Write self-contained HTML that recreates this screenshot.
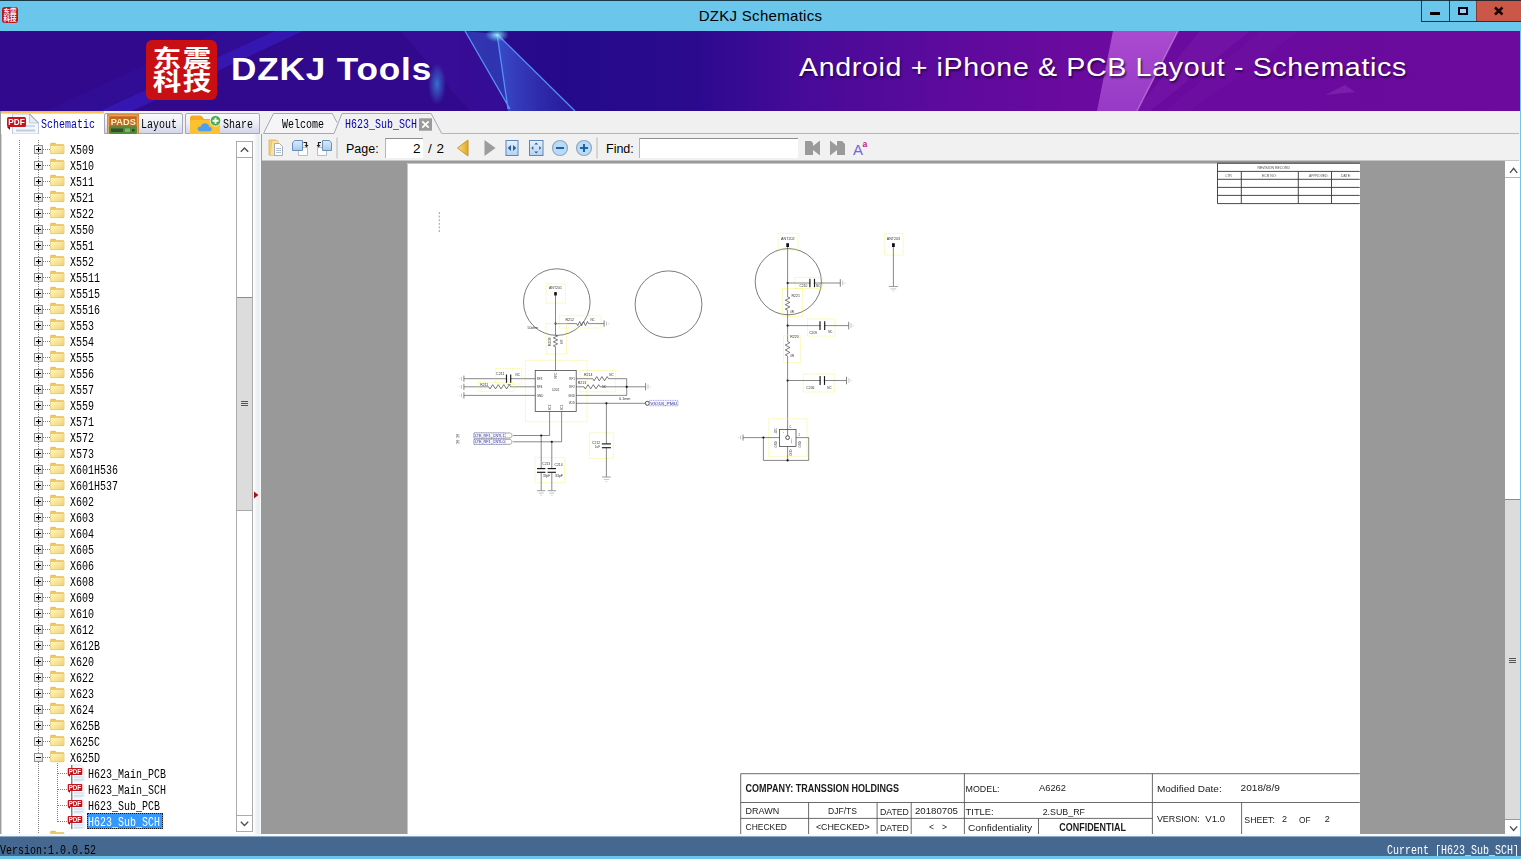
<!DOCTYPE html>
<html lang="en"><head><meta charset="utf-8"><title>DZKJ Schematics</title>
<style>
html,body{margin:0;padding:0;}
body{width:1521px;height:859px;overflow:hidden;background:#f0f0f0;font-family:"Liberation Sans",sans-serif;}
#win{position:relative;width:1521px;height:859px;overflow:hidden;background:#f0f0f0;}
.abs{position:absolute;}
/* SimSun-like narrow mono text */
.ss{font-family:"Liberation Mono",monospace;font-size:12px;line-height:16px;white-space:pre;display:inline-block;transform:scaleX(0.8333);transform-origin:0 50%;color:#000;}
/* title bar */
#titlebar{position:absolute;left:0;top:0;width:1521px;height:31px;background:#6ac6ea;}
#titlebar .topline{position:absolute;left:0;top:0;width:1521px;height:1px;background:rgba(10,30,40,.85);z-index:5;}
#title{position:absolute;left:0;top:7px;letter-spacing:.3px;width:1521px;text-align:center;font-size:15px;line-height:18px;color:#000;}
#appicon{position:absolute;left:2px;top:7px;width:16px;height:16px;border-radius:3px;background:#c01414;overflow:hidden;}
#wbtns{position:absolute;left:1421px;top:0;width:100px;height:22px;border:1px solid #143848;border-top:none;border-right:none;box-sizing:border-box;}
#wbtns .b{position:absolute;top:0;height:20px;}
/* banner */
#banner{position:absolute;left:0;top:31px;width:1520px;height:80px;overflow:hidden;background:linear-gradient(90deg,#30098c 0%,#30098c 30%,#240a8b 37%,#2c0a8f 46%,#480a99 53%,#5c0a9d 62%,#6a0a9f 70%,#6b0a9d 100%);}
#rightedge{position:absolute;left:1520px;top:22px;width:1px;height:837px;background:#6ac6ea;}
#logo{position:absolute;left:146px;top:9px;width:71px;height:60px;border-radius:6px;background:#c80f14;}
#logo span{position:absolute;transform:scale(1.1,.9);color:#fff;font-family:"Noto Sans CJK SC","WenQuanYi Zen Hei",sans-serif;font-weight:700;font-size:26px;line-height:26px;}
#bt1{position:absolute;left:231px;top:19px;font-family:"Liberation Sans",sans-serif;font-weight:700;font-size:31.4px;line-height:40px;letter-spacing:.75px;color:#fff;white-space:pre;transform:scaleX(1.12);transform-origin:0 50%;}
#bt2{position:absolute;left:799px;top:20px;font-family:"Liberation Sans",sans-serif;font-size:26px;line-height:32px;letter-spacing:.58px;color:#fff;white-space:pre;text-shadow:1px 2px 2px rgba(30,0,60,.8);transform:scaleX(1.1);transform-origin:0 50%;}
/* tabs row */
#tabs{position:absolute;left:0;top:111px;width:1520px;height:24px;background:#f0f0f0;}
.ltab{position:absolute;top:2px;height:21px;box-sizing:border-box;border:1px solid #a3a8b8;border-bottom:1px solid #a3a8b8;border-radius:2px 2px 0 0;background:linear-gradient(#fbfbfd 0%,#eceef6 50%,#d3d5ea 100%);}
#ltab0{position:absolute;left:0;top:0;width:104px;height:24px;background:linear-gradient(#f9b536 0,#fbc863 2px,#fff 3.5px,#fff 100%);box-sizing:border-box;border-left:1px solid #9c9c9c;}
/* left panel */
#left{position:absolute;left:0;top:134px;width:253px;height:701px;background:#fff;overflow:hidden;}
#split{position:absolute;left:253px;top:134px;width:8px;height:701px;background:linear-gradient(90deg,#fff 0%,#f2f5f6 35%,#e8edef 70%,#fbfcfc 100%);}
.row{position:absolute;left:0;height:16px;width:236px;}
.vdot{position:absolute;width:1px;background-image:linear-gradient(#808080 50%,transparent 50%);background-size:1px 2px;}
.hdot{position:absolute;height:1px;background-image:linear-gradient(90deg,#808080 50%,transparent 50%);background-size:2px 1px;}
.pm{position:absolute;width:9px;height:9px;box-sizing:border-box;border:1px solid #919191;background:linear-gradient(135deg,#fff,#dcdcdc);}
.pm:before{content:"";position:absolute;left:1px;top:3px;width:5px;height:1px;background:#000;}
.pm.plus:after{content:"";position:absolute;left:3px;top:1px;width:1px;height:5px;background:#000;}
/* scrollbars */
.sb{position:absolute;background:#fff;box-sizing:border-box;}
.sb .btn{position:absolute;left:0;width:100%;height:17px;box-sizing:border-box;border:1px solid #ababab;background:#fff;}
.sb .thumb{position:absolute;left:0;width:100%;background:#dcdcdc;box-sizing:border-box;border:1px solid #ababab;border-top-color:#8c8c8c;}
/* toolbar */
#toolbar{position:absolute;left:262px;top:134px;width:1258px;height:27px;background:#f1f1f2;}
.tbtxt{position:absolute;font-size:12.5px;line-height:16px;color:#000;white-space:pre;}
.inp{position:absolute;background:#fff;box-sizing:border-box;border-top:1px solid #8e8e8e;border-left:1px solid #b5b5b5;}
/* viewer */
#viewer{position:absolute;left:261px;top:161px;width:1244px;height:673px;background:#999;overflow:hidden;}
#paper{position:absolute;left:147px;top:3px;width:952px;height:680px;background:#fff;box-shadow:-1px -1px 0 #c8c8c8;}
/* status */
#status{position:absolute;left:0;top:836px;width:1521px;height:20px;background:#456890;border-top:1px solid #8fa9c4;box-sizing:border-box;}
#strip{position:absolute;left:0;top:834px;width:1520px;height:2px;background:#f6fafd;}
#bottomedge{position:absolute;left:0;top:856px;width:1521px;height:3px;background:#6ac6ea;}

.gl{will-change:transform;}

</style></head>
<body>
<div id="win">
<!-- titlebar -->
<div id="titlebar">
  <div class="topline"></div>
  <div id="appicon"><svg width="16" height="16" viewBox="0 0 16 16"><text x="1.5" y="7.3" font-size="6.5" font-weight="700" fill="#fff" font-family="Noto Sans CJK SC, sans-serif">东震</text><text x="1.5" y="14" font-size="6.5" font-weight="700" fill="#fff" font-family="Noto Sans CJK SC, sans-serif">科技</text></svg></div>
  <div id="title">DZKJ Schematics</div>
  <div id="wbtns">
    <div class="b" style="left:0;width:27px;border-right:1px solid #143848;height:21px"><div class="abs" style="left:8px;top:12px;width:10px;height:3px;background:#000"></div></div>
    <div class="b" style="left:28px;width:26px;height:21px"><div class="abs" style="left:8px;top:7px;width:10px;height:8px;border:2px solid #00001e;box-sizing:border-box;background:#9fd4ea"></div></div>
    <div class="b" style="left:54px;width:46px;height:21px;background:#cb5748;border-left:1px solid #8a3a30;box-sizing:border-box"><svg class="abs" style="left:16px;top:6px" width="12" height="10" viewBox="0 0 12 10"><path d="M2 1.500 L9.500 8.500 M9.500 1.500 L2 8.500" stroke="#140000" stroke-width="2.500" fill="none"/></svg></div>
  </div>
</div>
<div id="rightedge"></div>

<!-- banner -->
<div id="banner">
  <svg class="abs" style="left:0;top:0" width="1519" height="80" viewBox="0 31 1519 80">
    <defs>
      <linearGradient id="tri" x1="0" y1="0" x2="0" y2="1"><stop offset="0" stop-color="#4a7af0" stop-opacity=".55"/><stop offset="1" stop-color="#3c6ee8" stop-opacity=".75"/></linearGradient>
      <linearGradient id="tri2" x1="0" y1="0" x2="1" y2="0"><stop offset="0" stop-color="#3e62e0" stop-opacity=".75"/><stop offset="1" stop-color="#2c34b4" stop-opacity=".35"/></linearGradient>
      <radialGradient id="glow"><stop offset="0" stop-color="#3aa0f0" stop-opacity=".7"/><stop offset="1" stop-color="#3aa0f0" stop-opacity="0"/></radialGradient>
      <radialGradient id="star"><stop offset="0" stop-color="#9ff" stop-opacity=".9"/><stop offset="1" stop-color="#6cf" stop-opacity="0"/></radialGradient>
      <linearGradient id="pk" x1="0" y1="0" x2="0" y2="1"><stop offset="0" stop-color="#c060e0" stop-opacity=".75"/><stop offset="1" stop-color="#b45ae0" stop-opacity=".6"/></linearGradient>
    </defs>
    <polygon points="45,111 220,31 275,31 100,111" fill="#3a1cc0" opacity=".16"/>
    <polygon points="100,111 275,31 303,31 132,111" fill="#3c24d6" opacity=".5"/>
    <polygon points="400,31 465,31 510,111 470,111" fill="#4a14b0" opacity=".28"/><polygon points="465,31 497,34 508,111 510,111" fill="#3450c8" opacity=".6"/><polygon points="497,34 575,111 508,111" fill="url(#tri2)"/>
    <path d="M465 31 L510 109 M497 34 L508 109 M497 34 L575 111" stroke="#5a9cf8" stroke-width="1.3" fill="none" opacity=".9"/>
    <ellipse cx="497" cy="35" rx="12" ry="7" fill="url(#star)"/>
    <ellipse cx="437" cy="84" rx="9" ry="21" fill="url(#glow)" opacity=".95"/>
    <polygon points="1113,31 1178,31 1137,111 1097,111" fill="url(#pk)"/><path d="M1178 31 L1137 111" stroke="#e0a0f0" stroke-width="1.500" opacity=".5"/>
    <polygon points="1200,31 1250,31 1150,111 1135,111" fill="#a050d0" opacity=".13"/>
    <polygon points="1260,31 1300,31 1190,111 1165,111" fill="#9040c8" opacity=".07"/>
    <polygon points="1325,95 1345,85 1355,92" fill="#a050d0" opacity=".3"/>
  </svg>
  <div id="logo"><span style="left:8px;top:4px">东</span><span style="left:38px;top:4px">震</span><span style="left:8px;top:27px">科</span><span style="left:38px;top:27px">技</span></div>
  <div id="bt1">DZKJ Tools</div>
  <div id="bt2">Android + iPhone &amp; PCB Layout - Schematics</div>
</div>

<!-- tabs -->
<div id="tabs"><div class="gl abs" style="left:0;top:0;width:1520px;height:24px">
  <div id="ltab0">
    <svg class="abs" style="left:4px;top:2px" width="36" height="22" viewBox="0 0 36 22">
      <path d="M7.500 1 H24.500 L33.500 10 V21 H7.500 Z" fill="#f4f8fc" stroke="#c3cdd9" stroke-width="1"/>
      <path d="M24.500 1 V10 H33.500" fill="#e4ebf3" stroke="#b9c5d3" stroke-width=".8"/><path d="M24.500 1 L33.500 10" stroke="#6a7480" stroke-width=".7"/>
      <rect x="11" y="12" width="19" height="2" fill="#c8dcf0"/><rect x="11" y="16.500" width="19" height="2" fill="#b9cfe6"/>
      <rect x="2" y="4" width="19" height="10" rx="1.5" fill="#c8141c"/>
      <path d="M2 14 L5 17 V14 Z" fill="#7a0a10"/>
      <text x="3.2" y="12.2" font-family="Liberation Sans, sans-serif" font-weight="700" font-size="8.5" fill="#fff" textLength="16.5" lengthAdjust="spacingAndGlyphs">PDF</text>
    </svg>
    <span class="ss abs" style="left:40px;top:6px;color:#0000b4">Schematic</span>
  </div>
  <div class="ltab" style="left:104px;width:79px;">
    <svg class="abs" style="left:2px;top:0px" width="32" height="20" viewBox="0 0 32 20">
      <rect x="0.500" y="0.500" width="31" height="20" fill="#c4661c" stroke="#d98a3c"/>
      <rect x="1.800" y="1.800" width="28.400" height="18" fill="none" stroke="#f3d9a0" stroke-width=".7"/>
      <rect x="2.200" y="12.300" width="27.600" height="8" fill="#4e8c3c"/>
      <rect x="4" y="14.500" width="12" height="3.500" fill="#30502c"/><rect x="18" y="14.500" width="5" height="3.500" fill="#79b868"/><rect x="25" y="15" width="2.500" height="2.500" fill="#274a24"/>
      <text x="3.800" y="10.700" font-family="Liberation Sans, sans-serif" font-weight="700" font-size="9.300" fill="#fdf0c8" textLength="25" lengthAdjust="spacingAndGlyphs">PADS</text>
    </svg>
    <span class="ss abs" style="left:35.500px;top:3px;">Layout</span>
  </div>
  <div class="ltab" style="left:185px;width:75px;">
    <svg class="abs" style="left:3px;top:0" width="34" height="20" viewBox="0 0 34 20">
      <path d="M1 4 Q1 1.500 3.500 1.500 H11 Q12.500 1.500 13.500 3 L15 5 H28 Q30.500 5 30.500 7.500 V20 H1 Z" fill="#f9a825"/>
      <path d="M1 7.500 Q1 6 2.500 6 H29 Q30.500 6 30.500 7.500 V20 H1 Z" fill="#fcc12f"/>
      <path d="M11.600 17.200 Q8.300 17.200 8.700 14.300 Q9.300 12.100 11.800 12.500 Q13.400 8.400 17.400 9.400 Q20.200 10.300 20.300 13 Q22.900 13 22.800 15.300 Q22.700 17.200 20.600 17.200 Z" fill="#4f9ff0"/>
      <circle cx="26.500" cy="6.800" r="5.300" fill="#47ad4b" stroke="#ffffff" stroke-width=".8"/>
      <path d="M26.500 3.800 V9.800 M23.500 6.800 H29.500" stroke="#fff" stroke-width="1.900"/>
    </svg>
    <span class="ss abs" style="left:37px;top:3px;">Share</span>
  </div>
  <svg class="abs" style="left:255px;top:0" width="200" height="24" viewBox="255 111 200 24">
    <path d="M263.500 133.500 L273.500 113.500 H332.300 L337 122.500 L334 133.500 Z" fill="#f5f5f7" stroke="none"/>
    <path d="M263.500 133.500 L273.500 113.500 H332.300 L337 122.500 M263.500 133.500 H334" fill="none" stroke="#a4a8b4" stroke-width="1"/>
    <path d="M334 133.500 L342 113.500 H431.200 L441.700 133.500" fill="#f1f1f2" stroke="#a4a8b4" stroke-width="1"/>
    <path d="M335 134 H441" stroke="#f1f1f2" stroke-width="1.500"/>
    <rect x="419" y="118.300" width="13" height="12.400" fill="#9a9a9a"/>
    <path d="M422.300 121.300 L428.700 127.700 M428.700 121.300 L422.300 127.700" stroke="#fff" stroke-width="1.800"/>
  </svg>
  <span class="ss abs" style="left:282px;top:6px;">Welcome</span>
  <span class="ss abs" style="left:345px;top:6px;color:#0000b4">H623_Sub_SCH</span>
  <div class="abs" style="left:442px;top:22px;width:1077px;height:1px;background:#b4b6bc"></div>
</div></div>

<!-- tree -->
<div id="left"><div class="gl abs" style="left:0;top:0;width:253px;height:701px">
<div class="abs" style="left:0;top:0;width:1px;height:701px;background:#9c9c9c"></div><div class="abs" style="left:1px;top:0;width:1px;height:701px;background:#d4d4d4"></div>
<svg width="0" height="0" style="position:absolute"><defs>
<linearGradient id="fg" x1="0" y1="0" x2="1" y2="1"><stop offset="0" stop-color="#fff6c8"/><stop offset="1" stop-color="#f0d468"/></linearGradient>
<symbol id="fold" viewBox="0 0 16 13"><path d="M0.500 2 Q0.500 1 1.500 1 H5.500 L7 2.500 H14 Q15 2.500 15 3.500 V11.500 Q15 12.500 14 12.500 H1.500 Q0.500 12.500 0.500 11.500 Z" fill="#ecca62" stroke="#e0ba50" stroke-width=".6"/><path d="M0.800 4.200 H14.700 V11.500 Q14.700 12.200 14 12.200 H1.500 Q0.800 12.200 0.800 11.500 Z" fill="url(#fg)"/></symbol>
<symbol id="pdf" viewBox="0 0 18 17"><path d="M4.500 1 H13.500 L17 4.500 V17 H4.500 Z" fill="#f4f9fd" stroke="#d3deea" stroke-width=".7"/><path d="M4.800 1 V17" stroke="#4c5560" stroke-width="1"/><rect x="7" y="12.300" width="9" height="1.300" fill="#bfe0f4"/><rect x="7" y="14.800" width="9" height="1.300" fill="#bfe0f4"/><rect x="0.700" y="4" width="14.600" height="7" rx="1" fill="#c4141c"/><path d="M0.700 11 L3 12.800 V11 Z" fill="#7a0a10"/><text x="1.700" y="9.800" font-family="Liberation Sans, sans-serif" font-weight="700" font-size="6.500" fill="#fff" textLength="12.500" lengthAdjust="spacingAndGlyphs">PDF</text></symbol>
</defs></svg>
<div class="vdot" style="left:19px;top:6px;height:695px"></div>
<div class="vdot" style="left:38px;top:6px;height:695px"></div>
<div class="row" style="top:7px"><div class="hdot" style="left:43px;top:8px;width:7px"></div><div class="pm plus" style="left:34px;top:4px"></div><svg class="abs" style="left:50px;top:1px" width="15" height="12.500" preserveAspectRatio="none"><use href="#fold"/></svg><span class="ss abs" style="left:70px;top:2px">X509</span></div>
<div class="row" style="top:23px"><div class="hdot" style="left:43px;top:8px;width:7px"></div><div class="pm plus" style="left:34px;top:4px"></div><svg class="abs" style="left:50px;top:1px" width="15" height="12.500" preserveAspectRatio="none"><use href="#fold"/></svg><span class="ss abs" style="left:70px;top:2px">X510</span></div>
<div class="row" style="top:39px"><div class="hdot" style="left:43px;top:8px;width:7px"></div><div class="pm plus" style="left:34px;top:4px"></div><svg class="abs" style="left:50px;top:1px" width="15" height="12.500" preserveAspectRatio="none"><use href="#fold"/></svg><span class="ss abs" style="left:70px;top:2px">X511</span></div>
<div class="row" style="top:55px"><div class="hdot" style="left:43px;top:8px;width:7px"></div><div class="pm plus" style="left:34px;top:4px"></div><svg class="abs" style="left:50px;top:1px" width="15" height="12.500" preserveAspectRatio="none"><use href="#fold"/></svg><span class="ss abs" style="left:70px;top:2px">X521</span></div>
<div class="row" style="top:71px"><div class="hdot" style="left:43px;top:8px;width:7px"></div><div class="pm plus" style="left:34px;top:4px"></div><svg class="abs" style="left:50px;top:1px" width="15" height="12.500" preserveAspectRatio="none"><use href="#fold"/></svg><span class="ss abs" style="left:70px;top:2px">X522</span></div>
<div class="row" style="top:87px"><div class="hdot" style="left:43px;top:8px;width:7px"></div><div class="pm plus" style="left:34px;top:4px"></div><svg class="abs" style="left:50px;top:1px" width="15" height="12.500" preserveAspectRatio="none"><use href="#fold"/></svg><span class="ss abs" style="left:70px;top:2px">X550</span></div>
<div class="row" style="top:103px"><div class="hdot" style="left:43px;top:8px;width:7px"></div><div class="pm plus" style="left:34px;top:4px"></div><svg class="abs" style="left:50px;top:1px" width="15" height="12.500" preserveAspectRatio="none"><use href="#fold"/></svg><span class="ss abs" style="left:70px;top:2px">X551</span></div>
<div class="row" style="top:119px"><div class="hdot" style="left:43px;top:8px;width:7px"></div><div class="pm plus" style="left:34px;top:4px"></div><svg class="abs" style="left:50px;top:1px" width="15" height="12.500" preserveAspectRatio="none"><use href="#fold"/></svg><span class="ss abs" style="left:70px;top:2px">X552</span></div>
<div class="row" style="top:135px"><div class="hdot" style="left:43px;top:8px;width:7px"></div><div class="pm plus" style="left:34px;top:4px"></div><svg class="abs" style="left:50px;top:1px" width="15" height="12.500" preserveAspectRatio="none"><use href="#fold"/></svg><span class="ss abs" style="left:70px;top:2px">X5511</span></div>
<div class="row" style="top:151px"><div class="hdot" style="left:43px;top:8px;width:7px"></div><div class="pm plus" style="left:34px;top:4px"></div><svg class="abs" style="left:50px;top:1px" width="15" height="12.500" preserveAspectRatio="none"><use href="#fold"/></svg><span class="ss abs" style="left:70px;top:2px">X5515</span></div>
<div class="row" style="top:167px"><div class="hdot" style="left:43px;top:8px;width:7px"></div><div class="pm plus" style="left:34px;top:4px"></div><svg class="abs" style="left:50px;top:1px" width="15" height="12.500" preserveAspectRatio="none"><use href="#fold"/></svg><span class="ss abs" style="left:70px;top:2px">X5516</span></div>
<div class="row" style="top:183px"><div class="hdot" style="left:43px;top:8px;width:7px"></div><div class="pm plus" style="left:34px;top:4px"></div><svg class="abs" style="left:50px;top:1px" width="15" height="12.500" preserveAspectRatio="none"><use href="#fold"/></svg><span class="ss abs" style="left:70px;top:2px">X553</span></div>
<div class="row" style="top:199px"><div class="hdot" style="left:43px;top:8px;width:7px"></div><div class="pm plus" style="left:34px;top:4px"></div><svg class="abs" style="left:50px;top:1px" width="15" height="12.500" preserveAspectRatio="none"><use href="#fold"/></svg><span class="ss abs" style="left:70px;top:2px">X554</span></div>
<div class="row" style="top:215px"><div class="hdot" style="left:43px;top:8px;width:7px"></div><div class="pm plus" style="left:34px;top:4px"></div><svg class="abs" style="left:50px;top:1px" width="15" height="12.500" preserveAspectRatio="none"><use href="#fold"/></svg><span class="ss abs" style="left:70px;top:2px">X555</span></div>
<div class="row" style="top:231px"><div class="hdot" style="left:43px;top:8px;width:7px"></div><div class="pm plus" style="left:34px;top:4px"></div><svg class="abs" style="left:50px;top:1px" width="15" height="12.500" preserveAspectRatio="none"><use href="#fold"/></svg><span class="ss abs" style="left:70px;top:2px">X556</span></div>
<div class="row" style="top:247px"><div class="hdot" style="left:43px;top:8px;width:7px"></div><div class="pm plus" style="left:34px;top:4px"></div><svg class="abs" style="left:50px;top:1px" width="15" height="12.500" preserveAspectRatio="none"><use href="#fold"/></svg><span class="ss abs" style="left:70px;top:2px">X557</span></div>
<div class="row" style="top:263px"><div class="hdot" style="left:43px;top:8px;width:7px"></div><div class="pm plus" style="left:34px;top:4px"></div><svg class="abs" style="left:50px;top:1px" width="15" height="12.500" preserveAspectRatio="none"><use href="#fold"/></svg><span class="ss abs" style="left:70px;top:2px">X559</span></div>
<div class="row" style="top:279px"><div class="hdot" style="left:43px;top:8px;width:7px"></div><div class="pm plus" style="left:34px;top:4px"></div><svg class="abs" style="left:50px;top:1px" width="15" height="12.500" preserveAspectRatio="none"><use href="#fold"/></svg><span class="ss abs" style="left:70px;top:2px">X571</span></div>
<div class="row" style="top:295px"><div class="hdot" style="left:43px;top:8px;width:7px"></div><div class="pm plus" style="left:34px;top:4px"></div><svg class="abs" style="left:50px;top:1px" width="15" height="12.500" preserveAspectRatio="none"><use href="#fold"/></svg><span class="ss abs" style="left:70px;top:2px">X572</span></div>
<div class="row" style="top:311px"><div class="hdot" style="left:43px;top:8px;width:7px"></div><div class="pm plus" style="left:34px;top:4px"></div><svg class="abs" style="left:50px;top:1px" width="15" height="12.500" preserveAspectRatio="none"><use href="#fold"/></svg><span class="ss abs" style="left:70px;top:2px">X573</span></div>
<div class="row" style="top:327px"><div class="hdot" style="left:43px;top:8px;width:7px"></div><div class="pm plus" style="left:34px;top:4px"></div><svg class="abs" style="left:50px;top:1px" width="15" height="12.500" preserveAspectRatio="none"><use href="#fold"/></svg><span class="ss abs" style="left:70px;top:2px">X601H536</span></div>
<div class="row" style="top:343px"><div class="hdot" style="left:43px;top:8px;width:7px"></div><div class="pm plus" style="left:34px;top:4px"></div><svg class="abs" style="left:50px;top:1px" width="15" height="12.500" preserveAspectRatio="none"><use href="#fold"/></svg><span class="ss abs" style="left:70px;top:2px">X601H537</span></div>
<div class="row" style="top:359px"><div class="hdot" style="left:43px;top:8px;width:7px"></div><div class="pm plus" style="left:34px;top:4px"></div><svg class="abs" style="left:50px;top:1px" width="15" height="12.500" preserveAspectRatio="none"><use href="#fold"/></svg><span class="ss abs" style="left:70px;top:2px">X602</span></div>
<div class="row" style="top:375px"><div class="hdot" style="left:43px;top:8px;width:7px"></div><div class="pm plus" style="left:34px;top:4px"></div><svg class="abs" style="left:50px;top:1px" width="15" height="12.500" preserveAspectRatio="none"><use href="#fold"/></svg><span class="ss abs" style="left:70px;top:2px">X603</span></div>
<div class="row" style="top:391px"><div class="hdot" style="left:43px;top:8px;width:7px"></div><div class="pm plus" style="left:34px;top:4px"></div><svg class="abs" style="left:50px;top:1px" width="15" height="12.500" preserveAspectRatio="none"><use href="#fold"/></svg><span class="ss abs" style="left:70px;top:2px">X604</span></div>
<div class="row" style="top:407px"><div class="hdot" style="left:43px;top:8px;width:7px"></div><div class="pm plus" style="left:34px;top:4px"></div><svg class="abs" style="left:50px;top:1px" width="15" height="12.500" preserveAspectRatio="none"><use href="#fold"/></svg><span class="ss abs" style="left:70px;top:2px">X605</span></div>
<div class="row" style="top:423px"><div class="hdot" style="left:43px;top:8px;width:7px"></div><div class="pm plus" style="left:34px;top:4px"></div><svg class="abs" style="left:50px;top:1px" width="15" height="12.500" preserveAspectRatio="none"><use href="#fold"/></svg><span class="ss abs" style="left:70px;top:2px">X606</span></div>
<div class="row" style="top:439px"><div class="hdot" style="left:43px;top:8px;width:7px"></div><div class="pm plus" style="left:34px;top:4px"></div><svg class="abs" style="left:50px;top:1px" width="15" height="12.500" preserveAspectRatio="none"><use href="#fold"/></svg><span class="ss abs" style="left:70px;top:2px">X608</span></div>
<div class="row" style="top:455px"><div class="hdot" style="left:43px;top:8px;width:7px"></div><div class="pm plus" style="left:34px;top:4px"></div><svg class="abs" style="left:50px;top:1px" width="15" height="12.500" preserveAspectRatio="none"><use href="#fold"/></svg><span class="ss abs" style="left:70px;top:2px">X609</span></div>
<div class="row" style="top:471px"><div class="hdot" style="left:43px;top:8px;width:7px"></div><div class="pm plus" style="left:34px;top:4px"></div><svg class="abs" style="left:50px;top:1px" width="15" height="12.500" preserveAspectRatio="none"><use href="#fold"/></svg><span class="ss abs" style="left:70px;top:2px">X610</span></div>
<div class="row" style="top:487px"><div class="hdot" style="left:43px;top:8px;width:7px"></div><div class="pm plus" style="left:34px;top:4px"></div><svg class="abs" style="left:50px;top:1px" width="15" height="12.500" preserveAspectRatio="none"><use href="#fold"/></svg><span class="ss abs" style="left:70px;top:2px">X612</span></div>
<div class="row" style="top:503px"><div class="hdot" style="left:43px;top:8px;width:7px"></div><div class="pm plus" style="left:34px;top:4px"></div><svg class="abs" style="left:50px;top:1px" width="15" height="12.500" preserveAspectRatio="none"><use href="#fold"/></svg><span class="ss abs" style="left:70px;top:2px">X612B</span></div>
<div class="row" style="top:519px"><div class="hdot" style="left:43px;top:8px;width:7px"></div><div class="pm plus" style="left:34px;top:4px"></div><svg class="abs" style="left:50px;top:1px" width="15" height="12.500" preserveAspectRatio="none"><use href="#fold"/></svg><span class="ss abs" style="left:70px;top:2px">X620</span></div>
<div class="row" style="top:535px"><div class="hdot" style="left:43px;top:8px;width:7px"></div><div class="pm plus" style="left:34px;top:4px"></div><svg class="abs" style="left:50px;top:1px" width="15" height="12.500" preserveAspectRatio="none"><use href="#fold"/></svg><span class="ss abs" style="left:70px;top:2px">X622</span></div>
<div class="row" style="top:551px"><div class="hdot" style="left:43px;top:8px;width:7px"></div><div class="pm plus" style="left:34px;top:4px"></div><svg class="abs" style="left:50px;top:1px" width="15" height="12.500" preserveAspectRatio="none"><use href="#fold"/></svg><span class="ss abs" style="left:70px;top:2px">X623</span></div>
<div class="row" style="top:567px"><div class="hdot" style="left:43px;top:8px;width:7px"></div><div class="pm plus" style="left:34px;top:4px"></div><svg class="abs" style="left:50px;top:1px" width="15" height="12.500" preserveAspectRatio="none"><use href="#fold"/></svg><span class="ss abs" style="left:70px;top:2px">X624</span></div>
<div class="row" style="top:583px"><div class="hdot" style="left:43px;top:8px;width:7px"></div><div class="pm plus" style="left:34px;top:4px"></div><svg class="abs" style="left:50px;top:1px" width="15" height="12.500" preserveAspectRatio="none"><use href="#fold"/></svg><span class="ss abs" style="left:70px;top:2px">X625B</span></div>
<div class="row" style="top:599px"><div class="hdot" style="left:43px;top:8px;width:7px"></div><div class="pm plus" style="left:34px;top:4px"></div><svg class="abs" style="left:50px;top:1px" width="15" height="12.500" preserveAspectRatio="none"><use href="#fold"/></svg><span class="ss abs" style="left:70px;top:2px">X625C</span></div>
<div class="row" style="top:615px"><div class="hdot" style="left:43px;top:8px;width:7px"></div><div class="pm " style="left:34px;top:4px"></div><svg class="abs" style="left:50px;top:1px" width="15" height="12.500" preserveAspectRatio="none"><use href="#fold"/></svg><span class="ss abs" style="left:70px;top:2px">X625D</span></div>
<div class="vdot" style="left:57px;top:629px;height:59px"></div>
<div class="row" style="top:631px"><div class="hdot" style="left:58px;top:8px;width:9px"></div><svg class="abs" style="left:67px;top:-1px" width="18" height="17"><use href="#pdf"/></svg><span class="ss abs" style="left:87.500px;top:2px;">H623_Main_PCB</span></div>
<div class="row" style="top:647px"><div class="hdot" style="left:58px;top:8px;width:9px"></div><svg class="abs" style="left:67px;top:-1px" width="18" height="17"><use href="#pdf"/></svg><span class="ss abs" style="left:87.500px;top:2px;">H623_Main_SCH</span></div>
<div class="row" style="top:663px"><div class="hdot" style="left:58px;top:8px;width:9px"></div><svg class="abs" style="left:67px;top:-1px" width="18" height="17"><use href="#pdf"/></svg><span class="ss abs" style="left:87.500px;top:2px;">H623_Sub_PCB</span></div>
<div class="row" style="top:679px"><div class="hdot" style="left:58px;top:8px;width:9px"></div><div class="abs" style="left:87px;top:0px;width:76px;height:16px;background:#3399ff;box-sizing:border-box;border:1px dotted #1a1a1a"></div><svg class="abs" style="left:67px;top:-1px" width="18" height="17"><use href="#pdf"/></svg><span class="ss abs" style="left:87.500px;top:2px;color:#fff">H623_Sub_SCH</span></div>
<div class="row" style="top:695px"><svg class="abs" style="left:50px;top:1px" width="15" height="12.500" preserveAspectRatio="none"><use href="#fold"/></svg></div>
<div class="sb" style="left:236px;top:7px;width:17px;height:691px;border-left:1px solid #ababab;border-right:1px solid #ababab">
  <div class="btn" style="top:0;border-left:none;border-right:none"><svg class="abs" style="left:0;top:0" width="15" height="15" viewBox="0 0 15 15"><path d="M3.800 9.700 L7.500 6 L11.200 9.700" fill="none" stroke="#505050" stroke-width="1.400"/></svg></div>
  <div class="thumb" style="top:156px;height:214px;border-left:none;border-right:none"><div class="abs" style="left:4px;top:103px;width:7px;height:1px;background:#555;box-shadow:0 2px 0 #555,0 4px 0 #555"></div></div>
  <div class="btn" style="top:674px;border-left:none;border-right:none"><svg class="abs" style="left:0;top:0" width="15" height="15" viewBox="0 0 15 15"><path d="M3.800 5.800 L7.500 9.500 L11.200 5.800" fill="none" stroke="#505050" stroke-width="1.400"/></svg></div>
</div>
</div></div>
<div id="split"><svg class="abs" style="left:0;top:354px" width="8" height="14"><path d="M1 3.500 L5.400 7 L1 10.500 Z" fill="#a81414"/></svg></div>
<!-- toolbar -->
<div id="toolbar">
  <svg class="abs" style="left:0;top:0" width="640" height="27" viewBox="262 134 640 27">
    <defs>
      <linearGradient id="gold" x1="0" y1="0" x2="1" y2="0"><stop offset="0" stop-color="#f7e08a"/><stop offset="1" stop-color="#e0a81c"/></linearGradient>
      <linearGradient id="blu" x1="0" y1="0" x2="0" y2="1"><stop offset="0" stop-color="#e6f1fc"/><stop offset="1" stop-color="#b4d3f2"/></linearGradient>
      <linearGradient id="pg" x1="0" y1="0" x2="0" y2="1"><stop offset="0" stop-color="#dcebfa"/><stop offset="1" stop-color="#a9c9ec"/></linearGradient>
    </defs>
    <!-- icon1: folder + document -->
    <path d="M269 140 H276 V155 H269 Z" fill="#f2d27a" stroke="#dcb458" stroke-width=".8"/>
    <path d="M272 140.500 L278 140.500 V155.500 H270 Z" fill="#f8e3a0" stroke="#e0bb60" stroke-width=".6"/>
    <path d="M274.500 143.500 H279.500 L282.500 146.500 V155.500 H274.500 Z" fill="#fdfdfd" stroke="#9aa6b4" stroke-width=".9"/>
    <path d="M276 148.500 H281 M276 150.500 H281 M276 152.500 H281" stroke="#9fb4cc" stroke-width=".8"/>
    <!-- icon2: rotate right -->
    <path d="M298.500 147.500 H307.500 V155.500 H298.500 Z" fill="#fdfdfd" stroke="#b0b6be" stroke-width=".9"/>
    <path d="M292.500 143 L294.500 140.500 H302.500 V150.500 H292.500 Z" fill="url(#pg)" stroke="#5b86b8" stroke-width=".9"/>
    <path d="M303.500 142.500 H306.500 V145" fill="none" stroke="#222" stroke-width="1.200"/><path d="M304.500 145 H308.500 L306.500 147.500 Z" fill="#222"/>
    <!-- icon3: rotate left -->
    <path d="M317.500 147.500 H326.500 V155.500 H317.500 Z" fill="#fdfdfd" stroke="#b0b6be" stroke-width=".9"/>
    <path d="M322.500 140.500 H329.500 L331.500 143 V150.500 H322.500 Z" fill="url(#pg)" stroke="#5b86b8" stroke-width=".9"/>
    <path d="M321 142.500 H318.500 V145" fill="none" stroke="#222" stroke-width="1.200"/><path d="M316.500 145 H320.500 L318.500 147.500 Z" fill="#222"/>
    <path d="M337 137.500 V158.500" stroke="#b8b8b8" stroke-width="1"/>
    <!-- prev / next -->
    <path d="M468 140 L457.500 148 L468 156 Z" fill="url(#gold)" stroke="#c8962a" stroke-width="1" stroke-linejoin="round"/>
    <path d="M484.500 140 L495.500 148 L484.500 156 Z" fill="#9c9c9c"/>
    <!-- fit width -->
    <rect x="506" y="140.500" width="12" height="15" fill="url(#blu)" stroke="#5b86b8" stroke-width="1"/>
    <path d="M511 145 L507.700 148 L511 151 Z M513 145 L516.300 148 L513 151 Z" fill="#2e5f96"/>
    <!-- fit page -->
    <rect x="529.500" y="140.500" width="13.500" height="15" fill="url(#blu)" stroke="#5b86b8" stroke-width="1"/>
    <path d="M536.200 142.500 L534.200 144.500 H538.200 Z M536.200 153.500 L534.200 151.500 H538.200 Z M531.300 148 L533.300 146 V150 Z M541.200 148 L539.200 146 V150 Z" fill="#2e5f96"/>
    <!-- zoom out / in -->
    <circle cx="560" cy="148" r="7.500" fill="#b9dbf7" stroke="#8fa8c0" stroke-width="1.200"/>
    <path d="M556 148 H564" stroke="#1f62a8" stroke-width="2"/>
    <circle cx="584" cy="148" r="7.500" fill="#b9dbf7" stroke="#8fa8c0" stroke-width="1.200"/>
    <path d="M580 148 H588 M584 144 V152" stroke="#1f62a8" stroke-width="2"/>
    <path d="M597 137.500 V158.500" stroke="#b8b8b8" stroke-width="1"/>
    <!-- find prev / next -->
    <path d="M805 141 H811 L813 143 V146 L820 140.500 V155.500 L813 150 V155 H805 Z" fill="#9a9a9a"/>
    <path d="M830 140.500 L837 146 V141 H842 L845 144 V155 H837 V150 L830 155.500 Z" fill="#9a9a9a"/>
    <text x="853" y="155.300" font-family="Liberation Sans, sans-serif" font-size="15" fill="#7468d4">A</text>
    <text x="862.500" y="146.500" font-family="Liberation Sans, sans-serif" font-size="8.500" font-weight="700" fill="#c0207a">a</text>
  </svg>
  <span class="tbtxt" style="left:84px;top:7px">Page:</span>
  <div class="inp" style="left:123px;top:4px;width:38px;height:20px"></div>
  <span class="tbtxt" style="left:151px;top:7px;font-size:13.5px">2</span>
  <span class="tbtxt" style="left:166px;top:7px;font-size:13.5px;word-spacing:1px">/ 2</span>
  <span class="tbtxt" style="left:344px;top:7px">Find:</span>
  <div class="inp" style="left:377px;top:4px;width:159px;height:20px"></div>
  <div class="abs" style="left:0;top:26px;width:1257px;height:1px;background:#c6c6c6"></div><div class="abs" style="left:-1px;top:0;width:1px;height:27px;background:#9c9c9c"></div>
</div>

<!-- viewer -->
<div id="viewer">
<div id="paper"></div>
<div class="gl abs" style="left:0;top:0;width:1244px;height:674px"><svg class="abs" style="left:0;top:0" width="1244" height="674" viewBox="261 161 1244 674">
<path d="M1217.5 163.2 L1359.7 163.2" stroke="#333" stroke-width="0.9" fill="none"/>
<path d="M1217.5 171.4 L1359.7 171.4" stroke="#333" stroke-width="0.9" fill="none"/>
<path d="M1217.5 179.3 L1359.7 179.3" stroke="#333" stroke-width="0.9" fill="none"/>
<path d="M1217.5 187.4 L1359.7 187.4" stroke="#333" stroke-width="0.9" fill="none"/>
<path d="M1217.5 195.4 L1359.7 195.4" stroke="#333" stroke-width="0.9" fill="none"/>
<path d="M1217.5 203.6 L1359.7 203.6" stroke="#333" stroke-width="0.9" fill="none"/>
<path d="M1217.5 163.2 L1217.5 203.6" stroke="#333" stroke-width="0.9" fill="none"/>
<path d="M1241.3 171.4 L1241.3 203.6" stroke="#333" stroke-width="0.9" fill="none"/>
<path d="M1298.3 171.4 L1298.3 203.6" stroke="#333" stroke-width="0.9" fill="none"/>
<path d="M1331.5 171.4 L1331.5 203.6" stroke="#333" stroke-width="0.9" fill="none"/>
<text x="1273.7" y="168.6" font-size="3.5" fill="#444" text-anchor="middle" font-family="Liberation Sans, sans-serif" textLength="32.4" lengthAdjust="spacingAndGlyphs">REVISION RECORD</text>
<text x="1228.7" y="176.6" font-size="3.5" fill="#555" text-anchor="middle" font-family="Liberation Sans, sans-serif">LTR</text>
<text x="1269.3" y="176.6" font-size="3.5" fill="#555" text-anchor="middle" font-family="Liberation Sans, sans-serif">ECR NO:</text>
<text x="1318.7" y="176.6" font-size="3.5" fill="#555" text-anchor="middle" font-family="Liberation Sans, sans-serif" textLength="19.5" lengthAdjust="spacingAndGlyphs">APPROVED:</text>
<text x="1346.0" y="176.6" font-size="3.5" fill="#555" text-anchor="middle" font-family="Liberation Sans, sans-serif">DATE:</text>
<path d="M439.3 212 V232" stroke="#777" stroke-width=".7" stroke-dasharray="2 1.6" fill="none"/>
<circle cx="556.8" cy="302.1" r="33.3" fill="none" stroke="#444" stroke-width=".7"/>
<circle cx="668.5" cy="304.3" r="33.4" fill="none" stroke="#444" stroke-width=".7"/>
<circle cx="788.3" cy="281.7" r="33.1" fill="none" stroke="#444" stroke-width=".7"/>
<rect x="546.0" y="283.9" width="19.4" height="19.2" fill="none" stroke="#f0f05a" stroke-width=".65" stroke-dasharray="1.2 .6" opacity=".85"/>
<text x="555.5" y="288.8" font-size="3" fill="#333" text-anchor="middle" font-family="Liberation Sans, sans-serif" textLength="13.0" lengthAdjust="spacingAndGlyphs">ANT201</text>
<rect x="554.2" y="292.1" width="2.6" height="3.4" fill="#111"/>
<path d="M555.5 295.0 L555.5 335.0" stroke="#404040" stroke-width="0.62" fill="none"/>
<circle cx="555.5" cy="323.6" r="1.1" fill="#111"/>
<rect x="559.3" y="315.7" width="41.9" height="12.3" fill="none" stroke="#f0f05a" stroke-width=".65" stroke-dasharray="1.2 .6" opacity=".85"/>
<path d="M555.5 323.6 L576.7 323.6" stroke="#404040" stroke-width="0.62" fill="none"/>
<path d="M576.7 323.6 L577.7 325.7 L579.7 321.5 L581.6 325.7 L583.6 321.5 L585.5 325.7 L587.5 321.5 L588.5 323.6" stroke="#404040" stroke-width="0.7" fill="none" stroke-linejoin="miter"/>
<path d="M588.5 323.6 L604.1 323.6" stroke="#404040" stroke-width="0.62" fill="none"/>
<path d="M604.1 320.4 L604.1 326.8" stroke="#666" stroke-width="0.8" fill="none"/>
<path d="M606.5 321.7 L606.5 325.5" stroke="#aaa" stroke-width="0.7" fill="none"/>
<path d="M608.7 322.8 L608.7 324.4" stroke="#ccc" stroke-width="0.7" fill="none"/>
<text x="565.4" y="321.0" font-size="3" fill="#333" text-anchor="start" font-family="Liberation Sans, sans-serif" textLength="8.6" lengthAdjust="spacingAndGlyphs">R212</text>
<text x="590.4" y="320.6" font-size="3" fill="#333" text-anchor="start" font-family="Liberation Sans, sans-serif">NC</text>
<text x="527.5" y="329.4" font-size="3" fill="#333" text-anchor="start" font-family="Liberation Sans, sans-serif" textLength="10.5" lengthAdjust="spacingAndGlyphs">50ohm</text>
<rect x="546.0" y="323.6" width="20.5" height="30.4" fill="none" stroke="#f0f05a" stroke-width=".65" stroke-dasharray="1.2 .6" opacity=".85"/>
<path d="M555.5 334.9 L557.6 335.9 L553.4 337.9 L557.6 339.9 L553.4 341.8 L557.6 343.8 L553.4 345.8 L555.5 346.8" stroke="#404040" stroke-width="0.7" fill="none" stroke-linejoin="miter"/>
<path d="M555.5 346.8 L555.5 370.5" stroke="#404040" stroke-width="0.62" fill="none"/>
<text x="551.2" y="346.0" font-size="3" fill="#333" text-anchor="start" font-family="Liberation Sans, sans-serif" transform="rotate(-90 551.2 346.0)" textLength="8.6" lengthAdjust="spacingAndGlyphs">R208</text>
<text x="562.8" y="343.5" font-size="3" fill="#333" text-anchor="start" font-family="Liberation Sans, sans-serif" transform="rotate(-90 562.8 343.5)">0R</text>
<rect x="525.4" y="360.3" width="61.6" height="61.5" fill="none" stroke="#f0f05a" stroke-width=".65" stroke-dasharray="1.2 .6" opacity=".85"/>
<rect x="535.2" y="370.5" width="41" height="41" fill="none" stroke="#3c3c3c" stroke-width=".75"/>
<path d="M463.9 378.7 L535.2 378.7" stroke="#404040" stroke-width="0.62" fill="none"/>
<path d="M463.9 375.6 L463.9 381.8" stroke="#666" stroke-width="0.8" fill="none"/>
<path d="M461.5 376.8 L461.5 380.6" stroke="#aaa" stroke-width="0.7" fill="none"/>
<path d="M459.3 377.9 L459.3 379.5" stroke="#ccc" stroke-width="0.7" fill="none"/>
<text x="536.8" y="379.8" font-size="2.9" fill="#333" text-anchor="start" font-family="Liberation Sans, sans-serif">RF3</text>
<path d="M463.9 386.8 L535.2 386.8" stroke="#404040" stroke-width="0.62" fill="none"/>
<path d="M463.9 383.7 L463.9 389.9" stroke="#666" stroke-width="0.8" fill="none"/>
<path d="M461.5 384.9 L461.5 388.7" stroke="#aaa" stroke-width="0.7" fill="none"/>
<path d="M459.3 386.0 L459.3 387.6" stroke="#ccc" stroke-width="0.7" fill="none"/>
<text x="536.8" y="387.9" font-size="2.9" fill="#333" text-anchor="start" font-family="Liberation Sans, sans-serif">RF4</text>
<path d="M463.9 395.4 L535.2 395.4" stroke="#404040" stroke-width="0.62" fill="none"/>
<path d="M463.9 392.3 L463.9 398.5" stroke="#666" stroke-width="0.8" fill="none"/>
<path d="M461.5 393.5 L461.5 397.3" stroke="#aaa" stroke-width="0.7" fill="none"/>
<path d="M459.3 394.6 L459.3 396.2" stroke="#ccc" stroke-width="0.7" fill="none"/>
<text x="536.8" y="396.5" font-size="2.9" fill="#333" text-anchor="start" font-family="Liberation Sans, sans-serif">GND</text>
<text x="574.8" y="379.8" font-size="2.9" fill="#333" text-anchor="end" font-family="Liberation Sans, sans-serif">RF1</text>
<text x="574.8" y="387.9" font-size="2.9" fill="#333" text-anchor="end" font-family="Liberation Sans, sans-serif">RF2</text>
<text x="574.8" y="396.5" font-size="2.9" fill="#333" text-anchor="end" font-family="Liberation Sans, sans-serif">GND</text>
<text x="574.8" y="404.4" font-size="2.9" fill="#333" text-anchor="end" font-family="Liberation Sans, sans-serif">VDD</text>
<text x="555.6" y="390.5" font-size="2.9" fill="#333" text-anchor="middle" font-family="Liberation Sans, sans-serif">U202</text>
<text x="556.6" y="378.5" font-size="2.9" fill="#333" text-anchor="start" font-family="Liberation Sans, sans-serif" transform="rotate(-90 556.6 378.5)">RFC</text>
<text x="550.6" y="410.3" font-size="2.9" fill="#333" text-anchor="start" font-family="Liberation Sans, sans-serif" transform="rotate(-90 550.6 410.3)">SC2</text>
<text x="562.8" y="410.3" font-size="2.9" fill="#333" text-anchor="start" font-family="Liberation Sans, sans-serif" transform="rotate(-90 562.8 410.3)">SC1</text>
<rect x="495.7" y="368.6" width="26.1" height="15.4" fill="none" stroke="#f0f05a" stroke-width=".65" stroke-dasharray="1.2 .6" opacity=".85"/>
<path d="M506.5 374.5 L506.5 382.9" stroke="#1a1a1a" stroke-width="1.15" fill="none"/>
<path d="M510.7 374.5 L510.7 382.9" stroke="#1a1a1a" stroke-width="1.15" fill="none"/>
<rect x="507.2" y="377.9" width="2.8" height="1.6" fill="#fff"/>
<text x="496.0" y="374.8" font-size="3" fill="#333" text-anchor="start" font-family="Liberation Sans, sans-serif" textLength="8.5" lengthAdjust="spacingAndGlyphs">C211</text>
<text x="515.5" y="376.0" font-size="3" fill="#333" text-anchor="start" font-family="Liberation Sans, sans-serif">NC</text>
<rect x="478.0" y="382.3" width="35.9" height="9.0" fill="none" stroke="#f0f05a" stroke-width=".65" stroke-dasharray="1.2 .6" opacity=".85"/>
<rect x="488.6" y="385.8" width="22" height="2" fill="#fff"/>
<path d="M488.6 386.8 L490.0 388.9 L492.7 384.7 L495.5 388.9 L498.3 384.7 L501.0 388.9 L503.8 384.7 L506.6 388.9 L509.3 384.7 L510.7 386.8" stroke="#404040" stroke-width="0.7" fill="none" stroke-linejoin="miter"/>
<text x="480.3" y="385.6" font-size="3" fill="#333" text-anchor="start" font-family="Liberation Sans, sans-serif" textLength="8.0" lengthAdjust="spacingAndGlyphs">R211</text>
<text x="507.5" y="385.2" font-size="2.4" fill="#333" text-anchor="start" font-family="Liberation Sans, sans-serif">NC</text>
<rect x="579.7" y="370.5" width="35.9" height="21.3" fill="none" stroke="#f0f05a" stroke-width=".65" stroke-dasharray="1.2 .6" opacity=".85"/>
<path d="M576.2 378.7 L592.8 378.7" stroke="#404040" stroke-width="0.62" fill="none"/>
<path d="M592.8 378.7 L594.1 380.8 L596.7 376.6 L599.3 380.8 L602.0 376.6 L604.6 380.8 L607.2 376.6 L608.5 378.7" stroke="#404040" stroke-width="0.7" fill="none" stroke-linejoin="miter"/>
<path d="M608.5 378.7 L626.7 378.7" stroke="#404040" stroke-width="0.62" fill="none"/>
<text x="584.0" y="376.2" font-size="3" fill="#333" text-anchor="start" font-family="Liberation Sans, sans-serif" textLength="8.5" lengthAdjust="spacingAndGlyphs">R214</text>
<text x="609.3" y="375.6" font-size="3" fill="#333" text-anchor="start" font-family="Liberation Sans, sans-serif">NC</text>
<path d="M576.2 386.8 L584.0 386.8" stroke="#404040" stroke-width="0.62" fill="none"/>
<path d="M584.0 386.8 L585.3 388.9 L588.0 384.7 L590.7 388.9 L593.3 384.7 L596.0 388.9 L598.7 384.7 L600.0 386.8" stroke="#404040" stroke-width="0.7" fill="none" stroke-linejoin="miter"/>
<path d="M600.0 386.8 L645.6 386.8" stroke="#404040" stroke-width="0.62" fill="none"/>
<text x="577.8" y="384.4" font-size="3" fill="#333" text-anchor="start" font-family="Liberation Sans, sans-serif" textLength="8.5" lengthAdjust="spacingAndGlyphs">R213</text>
<text x="602.2" y="387.6" font-size="3" fill="#333" text-anchor="start" font-family="Liberation Sans, sans-serif">NC</text>
<path d="M576.2 395.4 L626.7 395.4" stroke="#404040" stroke-width="0.62" fill="none"/>
<path d="M626.7 378.7 L626.7 395.4" stroke="#404040" stroke-width="0.62" fill="none"/>
<circle cx="626.7" cy="386.8" r="1.1" fill="#111"/>
<path d="M645.6 383.2 L645.6 390.4" stroke="#666" stroke-width="0.8" fill="none"/>
<path d="M648.0 384.6 L648.0 389.0" stroke="#aaa" stroke-width="0.7" fill="none"/>
<path d="M650.2 385.9 L650.2 387.7" stroke="#ccc" stroke-width="0.7" fill="none"/>
<path d="M576.2 403.3 L645.2 403.3" stroke="#404040" stroke-width="0.62" fill="none"/>
<circle cx="606.4" cy="403.3" r="1.1" fill="#111"/>
<circle cx="647.3" cy="403.3" r="2" fill="#fff" stroke="#222" stroke-width=".8"/>
<rect x="649.5" y="400.4" width="28.5" height="5.4" fill="#f6f6ff" stroke="#4a4ab0" stroke-width=".5" stroke-dasharray="1 .7"/>
<text x="650.2" y="405.0" font-size="3.6" fill="#2a2a9a" text-anchor="start" font-family="Liberation Sans, sans-serif" textLength="27.0" lengthAdjust="spacingAndGlyphs">VIO18_PMU</text>
<text x="619.0" y="400.3" font-size="3" fill="#333" text-anchor="start" font-family="Liberation Sans, sans-serif" textLength="11.5" lengthAdjust="spacingAndGlyphs">0.1mm</text>
<path d="M549.6 411.5 L549.6 435.5 L513.2 435.5" stroke="#404040" stroke-width="0.62" fill="none" stroke-linejoin="miter"/>
<path d="M561.6 411.5 L561.6 441.8 L513.2 441.8" stroke="#404040" stroke-width="0.62" fill="none" stroke-linejoin="miter"/>
<circle cx="541.2" cy="435.5" r="1.1" fill="#111"/>
<circle cx="551.8" cy="441.8" r="1.1" fill="#111"/>
<path d="M474 433.0 H510.5 Q513.6 435.5 510.5 438.0 H474 Z" fill="#fff" stroke="#666" stroke-width=".6"/>
<rect x="474.2" y="433.0" width="31" height="5" fill="#f6f6ff" stroke="#4a4ab0" stroke-width=".5" stroke-dasharray="1 .7"/>
<text x="475.0" y="436.9" font-size="3.5" fill="#2a2a9a" text-anchor="start" font-family="Liberation Sans, sans-serif" textLength="29.5" lengthAdjust="spacingAndGlyphs">LTE_RF1_CNTL1</text>
<text x="456.0" y="436.7" font-size="3" fill="#333" text-anchor="start" font-family="Liberation Sans, sans-serif">[4]</text>
<path d="M474 439.3 H510.5 Q513.6 441.8 510.5 444.3 H474 Z" fill="#fff" stroke="#666" stroke-width=".6"/>
<rect x="474.2" y="439.3" width="31" height="5" fill="#f6f6ff" stroke="#4a4ab0" stroke-width=".5" stroke-dasharray="1 .7"/>
<text x="475.0" y="443.2" font-size="3.5" fill="#2a2a9a" text-anchor="start" font-family="Liberation Sans, sans-serif" textLength="29.5" lengthAdjust="spacingAndGlyphs">LTE_RF1_CNTL0</text>
<text x="456.0" y="443.0" font-size="3" fill="#333" text-anchor="start" font-family="Liberation Sans, sans-serif">[4]</text>
<rect x="535.2" y="457.6" width="29.2" height="25.2" fill="none" stroke="#f0f05a" stroke-width=".65" stroke-dasharray="1.2 .6" opacity=".85"/>
<path d="M541.2 435.5 L541.2 468.6" stroke="#404040" stroke-width="0.62" fill="none"/>
<path d="M537.0 468.6 L545.4 468.6" stroke="#1a1a1a" stroke-width="1.15" fill="none"/>
<path d="M537.0 472.3 L545.4 472.3" stroke="#1a1a1a" stroke-width="1.15" fill="none"/>
<path d="M541.2 472.3 L541.2 490.7" stroke="#404040" stroke-width="0.62" fill="none"/>
<path d="M537.0 490.7 L545.4 490.7" stroke="#888" stroke-width="0.8" fill="none"/>
<path d="M538.7 493.1 L543.7 493.1" stroke="#aaa" stroke-width="0.7" fill="none"/>
<path d="M540.2 495.3 L542.2 495.3" stroke="#ccc" stroke-width="0.7" fill="none"/>
<path d="M551.8 441.8 L551.8 468.6" stroke="#404040" stroke-width="0.62" fill="none"/>
<path d="M547.6 468.6 L556.0 468.6" stroke="#1a1a1a" stroke-width="1.15" fill="none"/>
<path d="M547.6 472.3 L556.0 472.3" stroke="#1a1a1a" stroke-width="1.15" fill="none"/>
<path d="M551.8 472.3 L551.8 490.7" stroke="#404040" stroke-width="0.62" fill="none"/>
<path d="M547.6 490.7 L556.0 490.7" stroke="#888" stroke-width="0.8" fill="none"/>
<path d="M549.3 493.1 L554.3 493.1" stroke="#aaa" stroke-width="0.7" fill="none"/>
<path d="M550.8 495.3 L552.8 495.3" stroke="#ccc" stroke-width="0.7" fill="none"/>
<text x="542.3" y="465.0" font-size="3" fill="#333" text-anchor="start" font-family="Liberation Sans, sans-serif" textLength="7.8" lengthAdjust="spacingAndGlyphs">C213</text>
<text x="554.5" y="465.8" font-size="3" fill="#333" text-anchor="start" font-family="Liberation Sans, sans-serif" textLength="8.0" lengthAdjust="spacingAndGlyphs">C214</text>
<text x="543.0" y="477.1" font-size="3" fill="#333" text-anchor="start" font-family="Liberation Sans, sans-serif" textLength="7.2" lengthAdjust="spacingAndGlyphs">33pF</text>
<text x="555.0" y="477.1" font-size="3" fill="#333" text-anchor="start" font-family="Liberation Sans, sans-serif" textLength="8.0" lengthAdjust="spacingAndGlyphs">33pF</text>
<rect x="589.6" y="432.8" width="23.7" height="25.6" fill="none" stroke="#f0f05a" stroke-width=".65" stroke-dasharray="1.2 .6" opacity=".85"/>
<path d="M606.4 403.3 L606.4 443.9" stroke="#404040" stroke-width="0.62" fill="none"/>
<path d="M601.9 443.9 L610.9 443.9" stroke="#1a1a1a" stroke-width="1.15" fill="none"/>
<path d="M601.9 447.7 L610.9 447.7" stroke="#1a1a1a" stroke-width="1.15" fill="none"/>
<path d="M606.4 447.7 L606.4 477.0" stroke="#404040" stroke-width="0.62" fill="none"/>
<path d="M602.0 477.0 L610.8 477.0" stroke="#888" stroke-width="0.8" fill="none"/>
<path d="M603.8 479.4 L609.0 479.4" stroke="#aaa" stroke-width="0.7" fill="none"/>
<path d="M605.3 481.6 L607.5 481.6" stroke="#ccc" stroke-width="0.7" fill="none"/>
<text x="592.0" y="443.7" font-size="3" fill="#333" text-anchor="start" font-family="Liberation Sans, sans-serif" textLength="8.2" lengthAdjust="spacingAndGlyphs">C212</text>
<text x="594.8" y="448.0" font-size="3" fill="#333" text-anchor="start" font-family="Liberation Sans, sans-serif">1uF</text>
<rect x="778.0" y="233.4" width="20.0" height="16.6" fill="none" stroke="#f0f05a" stroke-width=".65" stroke-dasharray="1.2 .6" opacity=".85"/>
<text x="787.8" y="240.3" font-size="3" fill="#333" text-anchor="middle" font-family="Liberation Sans, sans-serif" textLength="13.4" lengthAdjust="spacingAndGlyphs">ANT202</text>
<rect x="786.3" y="243.2" width="2.7" height="3.8" fill="#111"/>
<path d="M787.6 247.0 L787.6 296.9" stroke="#404040" stroke-width="0.62" fill="none"/>
<circle cx="787.6" cy="283.0" r="1.1" fill="#111"/>
<rect x="795.0" y="277.4" width="27.2" height="11.1" fill="none" stroke="#f0f05a" stroke-width=".65" stroke-dasharray="1.2 .6" opacity=".85"/>
<path d="M787.6 283.0 L840.3 283.0" stroke="#404040" stroke-width="0.62" fill="none"/>
<rect x="810.6" y="282" width="3.2" height="2" fill="#fff"/>
<path d="M809.9 278.8 L809.9 287.2" stroke="#1a1a1a" stroke-width="1.15" fill="none"/>
<path d="M814.5 278.8 L814.5 287.2" stroke="#1a1a1a" stroke-width="1.15" fill="none"/>
<path d="M840.3 279.2 L840.3 286.8" stroke="#666" stroke-width="0.8" fill="none"/>
<path d="M842.7 280.7 L842.7 285.3" stroke="#aaa" stroke-width="0.7" fill="none"/>
<path d="M844.9 282.1 L844.9 283.9" stroke="#ccc" stroke-width="0.7" fill="none"/>
<text x="799.4" y="287.1" font-size="3" fill="#333" text-anchor="start" font-family="Liberation Sans, sans-serif" textLength="8.0" lengthAdjust="spacingAndGlyphs">C210</text>
<text x="815.9" y="287.1" font-size="3" fill="#333" text-anchor="start" font-family="Liberation Sans, sans-serif">NC</text>
<rect x="782.4" y="288.5" width="20.2" height="28.0" fill="none" stroke="#f0f05a" stroke-width=".65" stroke-dasharray="1.2 .6" opacity=".85"/>
<path d="M787.6 296.9 L789.9 298.0 L785.3 300.2 L789.9 302.4 L785.3 304.7 L789.9 306.9 L785.3 309.1 L787.6 310.2" stroke="#404040" stroke-width="0.7" fill="none" stroke-linejoin="miter"/>
<path d="M787.6 310.2 L787.6 341.4" stroke="#404040" stroke-width="0.62" fill="none"/>
<text x="791.5" y="297.3" font-size="3" fill="#333" text-anchor="start" font-family="Liberation Sans, sans-serif" textLength="8.5" lengthAdjust="spacingAndGlyphs">R221</text>
<text x="790.0" y="312.7" font-size="3" fill="#333" text-anchor="start" font-family="Liberation Sans, sans-serif">0R</text>
<circle cx="787.6" cy="325.6" r="1.1" fill="#111"/>
<rect x="807.5" y="318.9" width="27.5" height="17.1" fill="none" stroke="#f0f05a" stroke-width=".65" stroke-dasharray="1.2 .6" opacity=".85"/>
<path d="M787.6 325.6 L848.7 325.6" stroke="#404040" stroke-width="0.62" fill="none"/>
<rect x="820.7" y="324.6" width="3.3" height="2" fill="#fff"/>
<path d="M820.0 321.3 L820.0 329.9" stroke="#1a1a1a" stroke-width="1.15" fill="none"/>
<path d="M824.7 321.3 L824.7 329.9" stroke="#1a1a1a" stroke-width="1.15" fill="none"/>
<path d="M848.7 321.8 L848.7 329.4" stroke="#666" stroke-width="0.8" fill="none"/>
<path d="M851.1 323.3 L851.1 327.9" stroke="#aaa" stroke-width="0.7" fill="none"/>
<path d="M853.3 324.7 L853.3 326.6" stroke="#ccc" stroke-width="0.7" fill="none"/>
<text x="809.2" y="333.6" font-size="3" fill="#333" text-anchor="start" font-family="Liberation Sans, sans-serif" textLength="8.0" lengthAdjust="spacingAndGlyphs">C209</text>
<text x="828.2" y="333.2" font-size="3" fill="#333" text-anchor="start" font-family="Liberation Sans, sans-serif">NC</text>
<rect x="783.5" y="335.7" width="16.9" height="26.9" fill="none" stroke="#f0f05a" stroke-width=".65" stroke-dasharray="1.2 .6" opacity=".85"/>
<path d="M787.6 341.4 L789.9 342.6 L785.3 345.1 L789.9 347.5 L785.3 350.0 L789.9 352.4 L785.3 354.9 L787.6 356.1" stroke="#404040" stroke-width="0.7" fill="none" stroke-linejoin="miter"/>
<path d="M787.6 356.1 L787.6 429.4" stroke="#404040" stroke-width="0.62" fill="none"/>
<text x="790.3" y="338.4" font-size="3" fill="#333" text-anchor="start" font-family="Liberation Sans, sans-serif" textLength="8.3" lengthAdjust="spacingAndGlyphs">R220</text>
<text x="790.3" y="357.1" font-size="3" fill="#333" text-anchor="start" font-family="Liberation Sans, sans-serif">0R</text>
<circle cx="787.6" cy="380.5" r="1.1" fill="#111"/>
<rect x="803.3" y="374.0" width="31.0" height="18.0" fill="none" stroke="#f0f05a" stroke-width=".65" stroke-dasharray="1.2 .6" opacity=".85"/>
<path d="M787.6 380.5 L846.5 380.5" stroke="#404040" stroke-width="0.62" fill="none"/>
<rect x="820.8" y="379.5" width="3" height="2" fill="#fff"/>
<path d="M820.1 376.1 L820.1 384.9" stroke="#1a1a1a" stroke-width="1.15" fill="none"/>
<path d="M824.5 376.1 L824.5 384.9" stroke="#1a1a1a" stroke-width="1.15" fill="none"/>
<path d="M846.5 376.7 L846.5 384.3" stroke="#666" stroke-width="0.8" fill="none"/>
<path d="M848.9 378.2 L848.9 382.8" stroke="#aaa" stroke-width="0.7" fill="none"/>
<path d="M851.1 379.6 L851.1 381.4" stroke="#ccc" stroke-width="0.7" fill="none"/>
<text x="806.3" y="389.0" font-size="3" fill="#333" text-anchor="start" font-family="Liberation Sans, sans-serif" textLength="8.2" lengthAdjust="spacingAndGlyphs">C206</text>
<text x="827.3" y="389.0" font-size="3" fill="#333" text-anchor="start" font-family="Liberation Sans, sans-serif">NC</text>
<rect x="768.8" y="418.8" width="38.2" height="37.5" fill="none" stroke="#f0f05a" stroke-width=".65" stroke-dasharray="1.2 .6" opacity=".85"/>
<rect x="779.4" y="429.4" width="16.6" height="17.1" fill="none" stroke="#3c3c3c" stroke-width=".75"/>
<circle cx="787.6" cy="437.6" r="1.9" fill="#fff" stroke="#222" stroke-width=".8"/>
<path d="M787.6 429.4 L787.6 435.7" stroke="#404040" stroke-width="0.62" fill="none"/>
<path d="M743.0 437.6 L779.4 437.6" stroke="#404040" stroke-width="0.62" fill="none"/>
<path d="M743.0 434.6 L743.0 440.6" stroke="#666" stroke-width="0.8" fill="none"/>
<path d="M740.6 435.8 L740.6 439.4" stroke="#aaa" stroke-width="0.7" fill="none"/>
<path d="M738.4 436.9 L738.4 438.4" stroke="#ccc" stroke-width="0.7" fill="none"/>
<circle cx="763.4" cy="437.6" r="1.1" fill="#111"/>
<path d="M763.4 437.6 L763.4 460.4 L808.7 460.4 L808.7 437.6 L796.0 437.6" stroke="#404040" stroke-width="0.62" fill="none" stroke-linejoin="miter"/>
<path d="M787.6 446.5 L787.6 460.4" stroke="#404040" stroke-width="0.62" fill="none"/>
<circle cx="787.6" cy="460.4" r="1.1" fill="#111"/>
<text x="777.2" y="433.5" font-size="2.6" fill="#333" text-anchor="start" font-family="Liberation Sans, sans-serif" transform="rotate(-90 777.2 433.5)">J201</text>
<text x="777.2" y="447.5" font-size="2.8" fill="#333" text-anchor="start" font-family="Liberation Sans, sans-serif" transform="rotate(-90 777.2 447.5)">GND</text>
<text x="801.0" y="447.5" font-size="2.8" fill="#333" text-anchor="start" font-family="Liberation Sans, sans-serif" transform="rotate(-90 801.0 447.5)">GND</text>
<text x="792.5" y="455.8" font-size="2.8" fill="#333" text-anchor="start" font-family="Liberation Sans, sans-serif" transform="rotate(-90 792.5 455.8)">GND</text>
<text x="789.6" y="427.6" font-size="2.6" fill="#333" text-anchor="start" font-family="Liberation Sans, sans-serif">C</text>
<text x="798.5" y="436.3" font-size="2.6" fill="#333" text-anchor="start" font-family="Liberation Sans, sans-serif">2</text>
<text x="783.5" y="434.0" font-size="2" fill="#333" text-anchor="start" font-family="Liberation Sans, sans-serif" transform="rotate(-90 783.5 434.0)">IN</text>
<text x="791.5" y="443.0" font-size="2" fill="#333" text-anchor="start" font-family="Liberation Sans, sans-serif" transform="rotate(-90 791.5 443.0)">GND</text>
<rect x="884.3" y="233.4" width="18.9" height="21.6" fill="none" stroke="#f0f05a" stroke-width=".65" stroke-dasharray="1.2 .6" opacity=".85"/>
<text x="893.4" y="240.3" font-size="3" fill="#333" text-anchor="middle" font-family="Liberation Sans, sans-serif" textLength="13.3" lengthAdjust="spacingAndGlyphs">ANT203</text>
<rect x="892" y="243.2" width="2.8" height="3.8" fill="#111"/>
<path d="M893.4 247.0 L893.4 286.5" stroke="#404040" stroke-width="0.62" fill="none"/>
<path d="M888.8 286.5 L898.0 286.5" stroke="#888" stroke-width="0.8" fill="none"/>
<path d="M890.6 288.9 L896.2 288.9" stroke="#aaa" stroke-width="0.7" fill="none"/>
<path d="M892.2 291.1 L894.5 291.1" stroke="#ccc" stroke-width="0.7" fill="none"/>
<path d="M740.7 773.7 L1359.7 773.7" stroke="#5a5a5a" stroke-width="0.9" fill="none"/>
<path d="M740.7 773.7 L740.7 835.5" stroke="#5a5a5a" stroke-width="0.9" fill="none"/>
<path d="M740.7 802.5 L1359.7 802.5" stroke="#5a5a5a" stroke-width="0.9" fill="none"/>
<path d="M740.7 818.4 L1152.4 818.4" stroke="#5a5a5a" stroke-width="0.9" fill="none"/>
<path d="M808.6 802.5 L808.6 835.5" stroke="#5a5a5a" stroke-width="0.9" fill="none"/>
<path d="M877.1 802.5 L877.1 835.5" stroke="#5a5a5a" stroke-width="0.9" fill="none"/>
<path d="M911.2 802.5 L911.2 835.5" stroke="#5a5a5a" stroke-width="0.9" fill="none"/>
<path d="M964.4 773.7 L964.4 835.5" stroke="#5a5a5a" stroke-width="0.9" fill="none"/>
<path d="M1038.5 818.4 L1038.5 835.5" stroke="#5a5a5a" stroke-width="0.9" fill="none"/>
<path d="M1152.4 773.7 L1152.4 835.5" stroke="#5a5a5a" stroke-width="0.9" fill="none"/>
<path d="M1241.6 802.5 L1241.6 835.5" stroke="#5a5a5a" stroke-width="0.9" fill="none"/>
<text x="745.6" y="791.9" font-size="10.1" fill="#1a1a1a" text-anchor="start" font-family="Liberation Sans, sans-serif" font-weight="700" textLength="153.4" lengthAdjust="spacingAndGlyphs">COMPANY: TRANSSION HOLDINGS</text>
<text x="745.6" y="814.2" font-size="9.9" fill="#1a1a1a" text-anchor="start" font-family="Liberation Sans, sans-serif" textLength="33.6" lengthAdjust="spacingAndGlyphs">DRAWN</text>
<text x="828.0" y="814.2" font-size="9.9" fill="#1a1a1a" text-anchor="start" font-family="Liberation Sans, sans-serif" textLength="29.0" lengthAdjust="spacingAndGlyphs">DJF/TS</text>
<text x="879.9" y="815.4" font-size="9.9" fill="#1a1a1a" text-anchor="start" font-family="Liberation Sans, sans-serif" textLength="29.0" lengthAdjust="spacingAndGlyphs">DATED</text>
<text x="915.0" y="814.2" font-size="9.9" fill="#1a1a1a" text-anchor="start" font-family="Liberation Sans, sans-serif" textLength="43.0" lengthAdjust="spacingAndGlyphs">20180705</text>
<text x="745.6" y="830.4" font-size="9.9" fill="#1a1a1a" text-anchor="start" font-family="Liberation Sans, sans-serif" textLength="41.3" lengthAdjust="spacingAndGlyphs">CHECKED</text>
<text x="815.9" y="830.4" font-size="9.9" fill="#1a1a1a" text-anchor="start" font-family="Liberation Sans, sans-serif" textLength="53.7" lengthAdjust="spacingAndGlyphs">&lt;CHECKED&gt;</text>
<text x="879.9" y="830.6" font-size="9.9" fill="#1a1a1a" text-anchor="start" font-family="Liberation Sans, sans-serif" textLength="29.0" lengthAdjust="spacingAndGlyphs">DATED</text>
<text x="929.0" y="830.4" font-size="9.9" fill="#1a1a1a" text-anchor="start" font-family="Liberation Sans, sans-serif" textLength="5.0" lengthAdjust="spacingAndGlyphs">&lt;</text>
<text x="942.0" y="830.4" font-size="9.9" fill="#1a1a1a" text-anchor="start" font-family="Liberation Sans, sans-serif" textLength="5.0" lengthAdjust="spacingAndGlyphs">&gt;</text>
<text x="965.6" y="791.9" font-size="9.9" fill="#1a1a1a" text-anchor="start" font-family="Liberation Sans, sans-serif" textLength="34.0" lengthAdjust="spacingAndGlyphs">MODEL:</text>
<text x="1038.9" y="791.1" font-size="9.9" fill="#1a1a1a" text-anchor="start" font-family="Liberation Sans, sans-serif" textLength="27.2" lengthAdjust="spacingAndGlyphs">A6262</text>
<text x="965.6" y="815.4" font-size="9.9" fill="#1a1a1a" text-anchor="start" font-family="Liberation Sans, sans-serif" textLength="28.0" lengthAdjust="spacingAndGlyphs">TITLE:</text>
<text x="1042.7" y="814.5" font-size="9.9" fill="#1a1a1a" text-anchor="start" font-family="Liberation Sans, sans-serif" textLength="42.3" lengthAdjust="spacingAndGlyphs">2.SUB_RF</text>
<text x="967.9" y="830.8" font-size="9.9" fill="#1a1a1a" text-anchor="start" font-family="Liberation Sans, sans-serif" textLength="64.2" lengthAdjust="spacingAndGlyphs">Confidentiality</text>
<text x="1059.3" y="830.6" font-size="10.1" fill="#1a1a1a" text-anchor="start" font-family="Liberation Sans, sans-serif" font-weight="700" textLength="66.6" lengthAdjust="spacingAndGlyphs">CONFIDENTIAL</text>
<text x="1156.9" y="791.9" font-size="9.9" fill="#1a1a1a" text-anchor="start" font-family="Liberation Sans, sans-serif" textLength="64.8" lengthAdjust="spacingAndGlyphs">Modified Date:</text>
<text x="1240.6" y="791.1" font-size="9.9" fill="#1a1a1a" text-anchor="start" font-family="Liberation Sans, sans-serif" textLength="39.3" lengthAdjust="spacingAndGlyphs">2018/8/9</text>
<text x="1156.9" y="822.1" font-size="9.9" fill="#1a1a1a" text-anchor="start" font-family="Liberation Sans, sans-serif" textLength="42.8" lengthAdjust="spacingAndGlyphs">VERSION:</text>
<text x="1205.3" y="822.1" font-size="9.9" fill="#1a1a1a" text-anchor="start" font-family="Liberation Sans, sans-serif" textLength="19.7" lengthAdjust="spacingAndGlyphs">V1.0</text>
<text x="1244.3" y="822.9" font-size="9.9" fill="#1a1a1a" text-anchor="start" font-family="Liberation Sans, sans-serif" textLength="30.6" lengthAdjust="spacingAndGlyphs">SHEET:</text>
<text x="1282.1" y="822.1" font-size="9.9" fill="#1a1a1a" text-anchor="start" font-family="Liberation Sans, sans-serif" textLength="5.0" lengthAdjust="spacingAndGlyphs">2</text>
<text x="1299.0" y="822.9" font-size="9.9" fill="#1a1a1a" text-anchor="start" font-family="Liberation Sans, sans-serif" textLength="11.6" lengthAdjust="spacingAndGlyphs">OF</text>
<text x="1324.8" y="822.1" font-size="9.9" fill="#1a1a1a" text-anchor="start" font-family="Liberation Sans, sans-serif" textLength="5.0" lengthAdjust="spacingAndGlyphs">2</text>
</svg></div>
</div>
<div class="sb" style="left:1505px;top:161px;width:15px;height:673px">
  <div class="abs" style="left:0;top:16px;width:15px;height:1px;background:#b4b4b4"></div>
  <svg class="abs" style="left:0;top:0" width="15" height="17" viewBox="0 0 15 17"><path d="M5 11.800 L8.600 7.400 L12.200 11.800" fill="none" stroke="#4a4a4a" stroke-width="1.300"/></svg>
  <div class="thumb" style="top:338px;height:321px;border-color:#8c8c8c #c8c8c8 #9a9a9a #c8c8c8;border-left:none;border-right:none"><div class="abs" style="left:4px;top:158px;width:7px;height:1px;background:#555;box-shadow:0 2px 0 #555,0 4px 0 #555"></div></div>
  <svg class="abs" style="left:0;top:657px" width="15" height="17" viewBox="0 0 15 17"><path d="M5 8.300 L8.600 12.500 L12.200 8.300" fill="none" stroke="#4a4a4a" stroke-width="1.300"/></svg>
</div>
<!-- status -->
<div id="strip"></div>
<div id="status"><div class="gl abs" style="left:0;top:0;width:1521px;height:19px">
  <span class="ss abs" style="left:0;top:6px;color:#000">Version:1.0.0.52</span>
  <span class="ss abs" style="left:1387px;top:6px;color:#fff">Current [H623_Sub_SCH]</span>
</div></div>
<div id="bottomedge"></div>

</div>
</body></html>
